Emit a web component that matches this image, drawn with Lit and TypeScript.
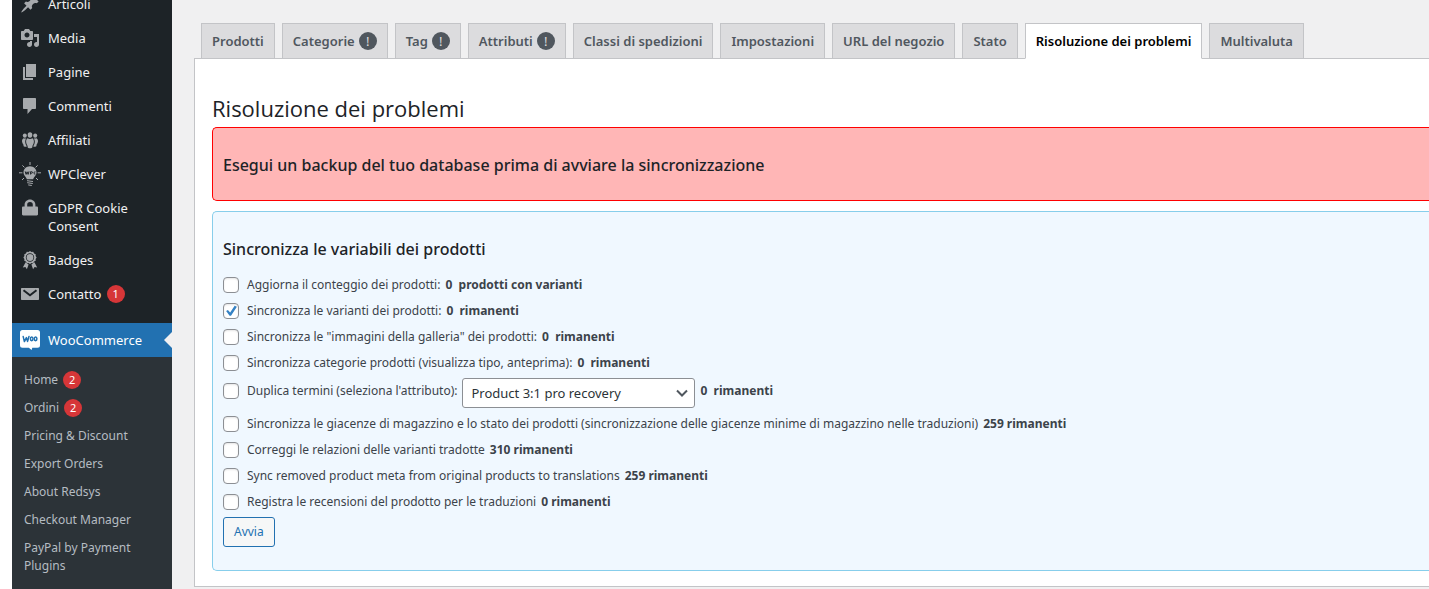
import { LitElement, html, css, svg, nothing } from "lit";
import { customElement } from "lit/decorators.js";
import { classMap } from "lit/directives/class-map.js";

const icons: Record<string, unknown> = {
  pin: svg`<path d="M10.44 3.02l1.82-1.82 6.36 6.35-1.83 1.82c-1.05-.68-2.48-.57-3.41.36l-.75.75c-.92.93-1.04 2.35-.35 3.41l-1.83 1.82-2.41-2.41-2.8 2.79c-.42.42-3.38 2.71-3.8 2.29s1.86-3.39 2.28-3.81l2.79-2.79L4.1 9.36l1.83-1.82c1.05.69 2.48.57 3.4-.36l.75-.75c.93-.92 1.05-2.35.36-3.41z"/>`,
  media: svg`<path d="M13 11V4c0-.55-.45-1-1-1h-1.67L9 1H5L3.67 3H2c-.55 0-1 .45-1 1v7c0 .55.45 1 1 1h10c.55 0 1-.45 1-1zM7 4.5c1.38 0 2.5 1.12 2.5 2.5S8.38 9.5 7 9.5 4.5 8.38 4.5 7 5.62 4.5 7 4.5zM14 6h5v10.5c0 1.38-1.12 2.5-2.5 2.5S14 17.88 14 16.5s1.12-2.5 2.5-2.5c.17 0 .34.02.5.05V9h-3V6zm-4 8.05V13h2v3.5c0 1.38-1.12 2.5-2.5 2.5S7 17.88 7 16.5 8.12 14 9.5 14c.17 0 .34.02.5.05z"/>`,
  page: svg`<path d="M6 15V2h10v13H6zm-1 1h8v2H3V5h2v11z"/>`,
  comment: svg`<path d="M4 2h11c.6 0 1 .4 1 1v9c0 .6-.4 1-1 1h-3l-4.500 5v-5H4c-.6 0-1-.4-1-1V3c0-.6.4-1 1-1z"/>`,
  groups: svg`<ellipse cx="10" cy="5" rx="2.300" ry="2.700"/><ellipse cx="4.800" cy="5.600" rx="2" ry="2.200"/><ellipse cx="15.200" cy="5.600" rx="2" ry="2.200"/>
    <path d="M7.600 8.300c.7.500 1.500.8 2.400.8s1.700-.3 2.400-.8c.9.600 1.500 1.700 1.500 3.200 0 1.900-.8 3.300-1.500 4.400V17c0 .8-1 1.300-2.400 1.300S7.600 17.800 7.600 17v-1.100c-.7-1.100-1.500-2.500-1.500-4.400 0-1.500.6-2.600 1.500-3.200z"/>
    <path d="M3.600 8.200c.8.400 1.900.5 2.700.1-.7.800-1.100 1.900-1.100 3.200 0 1.800.6 3.200 1.400 4.400v.8c-1.500.3-3.100-.1-3.100-1v-1C2.800 13.600 2 12.600 2 11c0-1.300.7-2.300 1.600-2.800zM16.400 8.200c-.8.400-1.900.5-2.700.1.700.8 1.100 1.900 1.100 3.200 0 1.800-.6 3.200-1.400 4.400v.8c1.500.3 3.100-.1 3.100-1v-1c.7-1.100 1.500-2.100 1.500-3.700 0-1.300-.7-2.300-1.600-2.800z"/>`,
  bulb: svg`<path d="M10 2.300c3.700 0 6.500 2.800 6.500 6.200 0 3.100-2.600 4.300-3.300 6.700H6.800c-.7-2.400-3.300-3.600-3.300-6.700 0-3.400 2.800-6.200 6.500-6.200z"/>
    <path class="dark-line" d="M5.200 7.400l.9 3 1-2.600 1 2.600.9-3M10.600 10.500V7.700h1c1.300 0 1.300 1.500 0 1.500h-.9M15.400 7.800c-1.800-.4-2 2.700 0 2.300"/>
    <path class="line" d="M10 1V-2M4.400 3.400L2.400 1.400M15.600 3.400L17.600 1.400M2.400 8.800H-1M17.600 8.800H21M4 14l-2 2M16 14l2 2M7 16.700l6 .8M7.200 18.700l5.600.8M8.200 20.900l3.600.6"/>`,
  lock: svg`<path fill-rule="evenodd" d="M4.600 8.500V6.800C4.600 3.800 7 1.500 10 1.500s5.400 2.300 5.400 5.300v1.700h1.400c.7 0 1.200.5 1.200 1.200v6.600c0 .7-.5 1.200-1.200 1.200H3.200c-.7 0-1.200-.5-1.200-1.200V9.700c0-.7.5-1.200 1.200-1.200zm2.600 0h5.600V6.800a2.800 2.800 0 0 0-5.600 0z"/>`,
  award: svg`<path fill-rule="evenodd" d="M10 1l1.500 1 1.700-.2.900 1.600 1.600.8-.1 1.800 1 1.500-1 1.500.1 1.800-1.600.8-.9 1.600-1.700-.2-1.500 1-1.500-1-1.700.2-.9-1.600-1.600-.8.100-1.800-1-1.500 1-1.500-.1-1.800 1.600-.8.900-1.600 1.700.2zm0 2.300a4.200 4.200 0 1 0 0 8.400 4.200 4.200 0 0 0 0-8.400z"/><circle cx="10" cy="7.500" r="3.400"/><path d="M5.600 12.300l3 2.200-1.700 4.800-1.500-2.200-2.600.5zM14.400 12.300l-3 2.200 1.700 4.800 1.500-2.200 2.600.5z"/>`,
  mail: svg`<path d="M2 4h16c.6 0 1 .4 1 1v10c0 .6-.4 1-1 1H2c-.6 0-1-.4-1-1V5c0-.6.4-1 1-1z"/><path class="flap" d="M3.500 6.200l6.500 5 6.500-5"/>`,
  woo: svg`<path class="white" d="M2.500 0h15A2.500 2.500 0 0 1 20 2.500v12.800a2.500 2.500 0 0 1-2.500 2.500h-5.200L11.600 20l-2.800-2.200H2.500A2.500 2.500 0 0 1 0 15.300V2.500A2.500 2.500 0 0 1 2.500 0z"/>
    <path class="woo-line" d="M3.200 6.600l1.200 5 2-4 1.200 3.800L9 6.400"/><ellipse class="woo-line" cx="11.700" cy="8.800" rx="1.300" ry="1.900"/><ellipse class="woo-line" cx="15.600" cy="8.800" rx="1.300" ry="1.900"/>`,
};

const menu = [
  { label: "Articoli", icon: "pin" },
  { label: "Media", icon: "media" },
  { label: "Pagine", icon: "page" },
  { label: "Commenti", icon: "comment" },
  { label: "Affiliati", icon: "groups" },
  { label: "WPClever", icon: "bulb" },
  { label: "GDPR Cookie Consent", icon: "lock" },
  { label: "Badges", icon: "award" },
  { label: "Contatto", icon: "mail", count: 1 },
];

const submenu = [
  { label: "Home", count: 2 },
  { label: "Ordini", count: 2 },
  { label: "Pricing & Discount" },
  { label: "Export Orders" },
  { label: "About Redsys" },
  { label: "Checkout Manager" },
  { label: "PayPal by Payment Plugins" },
];

const tabs = [
  { label: "Prodotti" },
  { label: "Categorie", alert: true },
  { label: "Tag", alert: true },
  { label: "Attributi", alert: true },
  { label: "Classi di spedizioni" },
  { label: "Impostazioni" },
  { label: "URL del negozio" },
  { label: "Stato" },
  { label: "Risoluzione dei problemi", active: true },
  { label: "Multivaluta" },
];

const NB = "\u00a0";
const tasks = [
  { label: "Aggiorna il conteggio dei prodotti:", result: `0 ${NB}prodotti con varianti` },
  { label: "Sincronizza le varianti dei prodotti:", result: `0 ${NB}rimanenti`, checked: true },
  { label: 'Sincronizza le "immagini della galleria" dei prodotti:', result: `0 ${NB}rimanenti` },
  { label: "Sincronizza categorie prodotti (visualizza tipo, anteprima):", result: `0 ${NB}rimanenti` },
  { label: "Duplica termini (seleziona l'attributo):", result: `0 ${NB}rimanenti`, select: true },
  { label: "Sincronizza le giacenze di magazzino e lo stato dei prodotti (sincronizzazione delle giacenze minime di magazzino nelle traduzioni)", result: "259 rimanenti" },
  { label: "Correggi le relazioni delle varianti tradotte", result: "310 rimanenti" },
  { label: "Sync removed product meta from original products to translations", result: "259 rimanenti" },
  { label: "Registra le recensioni del prodotto per le traduzioni", result: "0 rimanenti" },
];

@customElement("admin-sidebar")
export class AdminSidebar extends LitElement {
  static styles = css`
    :host { display: block; background: linear-gradient(#1d2327 357px, #2c3338 357px); font-size: 13px; line-height: 18px; }
    .menu { list-style: none; padding: 0; margin: -13px 0 0; }
    .link { display: grid; grid-template-columns: 36px 1fr; color: #f0f0f1; text-decoration: none; }
    .icon { width: 20px; height: 20px; margin: 7px 8px; fill: #a7aaad; overflow: visible; }
    .line { fill: none; stroke: #a7aaad; stroke-width: 1; }
    .dark-line { fill: none; stroke: #1d2327; stroke-width: 1; }
    .flap { fill: none; stroke: #1d2327; stroke-width: 2; }
    .white { fill: #fff; }
    .woo-line { fill: none; stroke: #2271b1; stroke-width: 1.500; stroke-linejoin: round; stroke-linecap: round; }
    .name { padding: 8px 8px 8px 0; }
    .current { position: relative; margin-top: 12px; background: #2271b1; }
    .current .link { color: #fff; }
    .current::after { content: ""; position: absolute; right: 0; top: 9px; border: 8px solid transparent; border-left-width: 0; border-right-color: #f0f0f1; }
    .count { display: inline-block; box-sizing: border-box; min-width: 18px; height: 18px; margin-left: 2px; padding: 0 5px; border-radius: 9px; background: #d63638; color: #fff; font-size: 11px; line-height: 18px; text-align: center; vertical-align: top; }
    .submenu { list-style: none; margin: 0; padding: 9px 0 12px; background: #2c3338; font-size: 12px; }
    .sub-link { display: block; padding: 5px 12px; color: #b5bcc2; text-decoration: none; }
  `;
  render() {
    return html`<nav aria-label="Menu principale">
      <ul class="menu">
        ${menu.map((m) => html`<li>
          <a class="link" href="#"><svg class="icon" viewBox="0 0 20 20" aria-hidden="true">${icons[m.icon]}</svg>
          <span class="name">${m.label} ${m.count ? html`<span class="count">${m.count}</span>` : nothing}</span></a>
        </li>`)}
        <li>
          <div class="current"><a class="link" href="#" aria-current="true"><svg class="icon" viewBox="0 0 20 20" aria-hidden="true">${icons.woo}</svg><span class="name">WooCommerce</span></a></div>
          <ul class="submenu">
            ${submenu.map((s) => html`<li><a class="sub-link" href="#">${s.label} ${s.count ? html`<span class="count">${s.count}</span>` : nothing}</a></li>`)}
          </ul>
        </li>
      </ul>
    </nav>`;
  }
}

@customElement("sync-panel")
export class SyncPanel extends LitElement {
  static styles = css`
    :host { display: block; }
    .box { padding: 25px 10px 23px; border: 1px solid #87ceeb; border-right: 0; border-radius: 5px 0 0 5px; background: #f0f8ff; }
    .title { margin: 0 0 11px; color: #1d2327; font-size: 16px; line-height: 24px; font-weight: 500; }
    .task { display: flex; align-items: center; gap: 5px; line-height: 26px; }
    .task.with-select { align-items: flex-start; padding: 2px 0 3px; }
    .task-label { display: flex; align-items: center; gap: 8px; }
    .check { appearance: none; display: grid; place-content: center; flex: none; box-sizing: border-box; width: 16px; height: 16px; margin: 0; border: 1px solid #8c8f94; border-radius: 4px; background: #fff; box-shadow: inset 0 1px 2px rgba(0, 0, 0, 0.1); }
    .check:checked::before { content: ""; width: 14px; height: 14px; background: #3582c4; clip-path: polygon(15% 50%, 28% 42%, 44% 60%, 76% 12%, 92% 20%, 50% 84%, 40% 84%); }
    .select-wrap { display: grid; width: 233px; }
    .select { grid-area: 1 / 1; appearance: none; height: 30px; box-sizing: border-box; padding: 0 24px 0 8px; border: 1px solid #8c8f94; border-radius: 3px; background: #fff; color: #2c3338; font: 13px/28px "Noto Sans", sans-serif; }
    .chevron { grid-area: 1 / 1; place-self: center end; width: 16px; height: 16px; margin-right: 5px; fill: none; stroke: #50575e; stroke-width: 2; pointer-events: none; z-index: 1; }
    .run { display: block; margin: 2px 0 0; height: 30px; padding: 0 10px; border: 1px solid #2271b1; border-radius: 3px; background: #f6f7f7; color: #2271b1; font: 12px/28px "Noto Sans", sans-serif; }
  `;
  render() {
    return html`<form class="box" @submit=${(e: Event) => e.preventDefault()}>
      <h3 class="title">Sincronizza le variabili dei prodotti</h3>
      ${tasks.map((t) => html`<div class=${classMap({ task: true, "with-select": !!t.select })}>
        <label class="task-label"><input class="check" type="checkbox" .checked=${!!t.checked} />${t.label}</label>
        ${t.select ? html`<span class="select-wrap"><select class="select" aria-label="Attributo"><option>Product 3:1 pro recovery</option></select>
          <svg class="chevron" viewBox="0 0 16 16" aria-hidden="true"><path d="M3 5.500l5 5 5-5"/></svg></span>` : nothing}
        <strong>${t.result}</strong>
      </div>`)}
      <button class="run" type="submit">Avvia</button>
    </form>`;
  }
}

@customElement("app-root")
export class AppRoot extends LitElement {
  static styles = css`
    :host { display: grid; grid-template-columns: 160px minmax(0, 1fr); box-sizing: border-box; height: 100vh; overflow: hidden; padding-left: 12px; background: linear-gradient(90deg, #fff 12px, #f0f0f1 12px); color: #3c434a; font: 12px/18px "Noto Sans", "Open Sans", sans-serif; }
    .main { padding: 23px 0 0 22px; }
    .tabs { display: flex; gap: 7px; padding-left: 7px; }
    .tab { display: flex; align-items: center; gap: 4px; box-sizing: border-box; height: 36px; margin-bottom: -1px; padding: 0 10px; border: 1px solid #c3c4c7; background: #dcdcde; color: #50575e; font-size: 13px; font-weight: 600; text-decoration: none; white-space: nowrap; }
    .tab.active { position: relative; border-bottom-color: #fff; background: #fff; color: #000; }
    .alert { display: grid; place-content: center; width: 18px; height: 18px; border-radius: 50%; background: #50575e; color: #dcdcde; font-size: 13px; font-weight: 400; }
    .panel { padding: 32px 0 15px 17px; border: 1px solid #c3c4c7; border-right: 0; background: #fff; }
    .heading { margin: 0 0 2px; color: #1d2327; font-family: "Open Sans", sans-serif; font-size: 22px; line-height: 34px; font-weight: 400; }
    .warning { margin-bottom: 10px; padding: 25px 10px 23px; border: 1px solid #f00; border-right: 0; border-radius: 5px 0 0 5px; background: #ffb6b6; color: #1d2327; font-size: 16px; line-height: 24px; font-weight: 500; }
  `;
  render() {
    return html`<admin-sidebar></admin-sidebar>
      <main class="main">
        <nav class="tabs" aria-label="Sezioni">
          ${tabs.map((t) => html`<a class=${classMap({ tab: true, active: !!t.active })} href="#">${t.label}${t.alert ? html`<span class="alert">!</span>` : nothing}</a>`)}
        </nav>
        <section class="panel">
          <h2 class="heading">Risoluzione dei problemi</h2>
          <div class="warning">Esegui un backup del tuo database prima di avviare la sincronizzazione</div>
          <sync-panel></sync-panel>
        </section>
      </main>`;
  }
}
